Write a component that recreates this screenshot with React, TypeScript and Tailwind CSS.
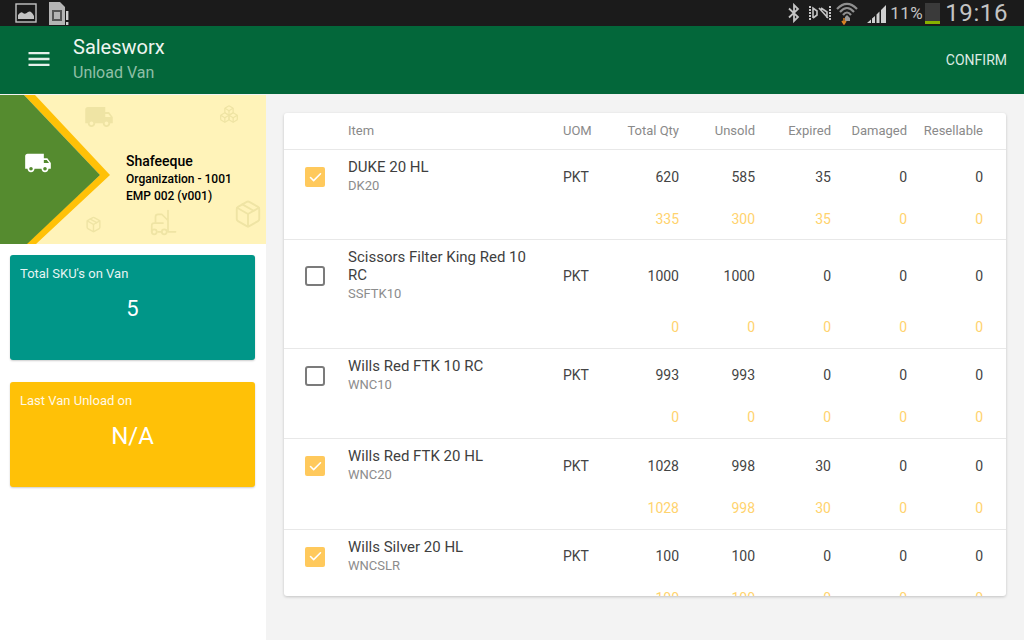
import { MdLocalShipping, MdMenu } from 'react-icons/md'
import { Boxes, Check, Forklift, Package } from 'lucide-react'

interface Row {
  name: string
  code: string
  checked: boolean
  qty: number[]
  unload: number[]
}

const rows: Row[] = [
  { name: 'DUKE 20 HL', code: 'DK20', checked: true, qty: [620, 585, 35, 0, 0], unload: [335, 300, 35, 0, 0] },
  { name: 'Scissors Filter King Red 10 RC', code: 'SSFTK10', checked: false, qty: [1000, 1000, 0, 0, 0], unload: [0, 0, 0, 0, 0] },
  { name: 'Wills Red FTK 10 RC', code: 'WNC10', checked: false, qty: [993, 993, 0, 0, 0], unload: [0, 0, 0, 0, 0] },
  { name: 'Wills Red FTK 20 HL', code: 'WNC20', checked: true, qty: [1028, 998, 30, 0, 0], unload: [1028, 998, 30, 0, 0] },
  { name: 'Wills Silver 20 HL', code: 'WNCSLR', checked: true, qty: [100, 100, 0, 0, 0], unload: [100, 100, 0, 0, 0] },
]

const columns = ['Total Qty', 'Unsold', 'Expired', 'Damaged', 'Resellable']

function StatusBar() {
  return (
    <div className="flex h-[26px] shrink-0 items-center bg-[#1b1b1b] text-[#c4c4c4]">
      <svg width="22" height="20" viewBox="0 0 22 20" className="ml-[15px]">
        <rect x="1" y="1" width="20" height="18" fill="none" stroke="#c4c4c4" strokeWidth="1.4" />
        <path d="M3 16 L3 12 Q6 8 8 10 Q10 12 13 9 Q16 7 19 13 L19 16 Z" fill="#c4c4c4" />
      </svg>
      <svg width="20" height="24" viewBox="0 0 20 24" className="ml-[12px]">
        <path d="M0 1 H11 L16 6 V24 H0 Z" fill="#b5b5b5" />
        <rect x="3" y="9" width="10" height="11" fill="#555" />
        <rect x="5" y="11" width="6" height="7" fill="#b5b5b5" />
        <rect x="17" y="10" width="2.4" height="9" fill="#d0d0d0" />
        <rect x="17" y="21" width="2.4" height="3" fill="#d0d0d0" />
      </svg>
      <div className="ml-auto flex items-center">
        <svg width="12" height="20" viewBox="0 0 12 20">
          <path d="M1 5.5 L10 14 L6 18 V2 L10 6 L1 14.5" fill="none" stroke="#c4c4c4" strokeWidth="1.8" />
        </svg>
        <svg width="24" height="18" viewBox="0 0 24 18" className="ml-[8px]">
          <path d="M2 2 V16 M22 2 V16" stroke="#c4c4c4" strokeWidth="2" strokeDasharray="2 1" fill="none" />
          <path d="M5 14 V4 L9 7 V11 L5 14 M11 4 L20 14 M13 4 L19 8 V14" fill="none" stroke="#c4c4c4" strokeWidth="1.6" />
        </svg>
        <svg width="22" height="24" viewBox="0 0 22 24" className="ml-[4px]">
          <path d="M1 8 Q11 -2 21 8 M4 11 Q11 3 18 11 M7 14 Q11 9 15 14" fill="none" stroke="#8f8f8f" strokeWidth="2.2" />
          <path d="M11 14 L14 17 V20 H9 V16 Z" fill="#9a9a9a" />
          <path d="M8 17 V22 M6 20 L8 23 L10 20" fill="none" stroke="#d98324" strokeWidth="1.5" />
        </svg>
        <svg width="20" height="20" viewBox="0 0 20 20" className="ml-[9px]">
          <path d="M0 20 L4 16.5 V20 Z M5 20 V15.5 L8 13 V20 Z M9.5 20 V11.5 L12.5 8.5 V20 Z M14 20 V7 L19 2 V20 Z" fill="#d0d0d0" />
        </svg>
        <span className="ml-[3px] text-[17px] leading-none tracking-[0.5px] [font-family:Roboto,sans-serif]">11%</span>
        <div className="ml-[2px] flex h-[21px] w-[15px] flex-col justify-end bg-[#3a3a3a]">
          <div className="h-[3px] bg-[#86b000]" />
        </div>
        <span className="ml-[5px] mr-[16px] text-[24px] leading-none tracking-[0.6px] [font-family:Roboto,sans-serif]">19:16</span>
      </div>
    </div>
  )
}

function Banner() {
  return (
    <div className="relative h-[149px] overflow-hidden bg-[#fff3b9]">
      <svg width="266" height="149" viewBox="0 0 266 149" className="absolute left-0 top-0">
        <path d="M24 0 H35 L110 80 L36 149 H26 L100 80 Z" fill="#ffc107" />
        <path d="M0 0 H24 L100 80 L27 149 H0 Z" fill="#558b2f" />
      </svg>
      <MdLocalShipping className="absolute left-[24px] top-[54px] text-[28px] text-white" />
      <MdLocalShipping className="absolute left-[84px] top-[7px] text-[30px] text-[#efe4a4]" />
      <Boxes className="absolute left-[219px] top-[9px] h-[20px] w-[20px] text-[#efe4a4]" strokeWidth={1.5} />
      <Package className="absolute left-[85px] top-[121px] h-[17px] w-[17px] text-[#efe4a4]" strokeWidth={2} />
      <Forklift className="absolute left-[144px] top-[113px] h-[30px] w-[38px] text-[#efe4a4]" strokeWidth={1.4} />
      <Package className="absolute left-[233px] top-[104px] h-[30px] w-[30px] text-[#efe4a4]" strokeWidth={1.5} />
      <div className="absolute left-[126px] top-[57px] text-black">
        <div className="text-[14px] font-medium leading-[18px]">Shafeeque</div>
        <div className="mt-[1px] text-[12px] font-medium leading-[17px]">Organization - 1001</div>
        <div className="text-[12px] font-medium leading-[17px]">EMP 002 (v001)</div>
      </div>
    </div>
  )
}

function StatCard({ title, value, color, size }: { title: string; value: string; color: string; size: string }) {
  return (
    <div className={`h-[105px] rounded-[3px] px-[10px] pt-[10px] text-white shadow-[0_1px_2px_rgba(0,0,0,0.2)] ${color}`}>
      <div className="text-[13px] leading-[18px] opacity-90">{title}</div>
      <div className={`mt-[10px] text-center leading-[32px] ${size}`}>{value}</div>
    </div>
  )
}

function TableRow({ row }: { row: Row }) {
  return (
    <div className="border-b border-[#e8e8e8] pb-[10.4px] pr-[22px] pt-[8px]">
      <div className="flex items-center">
        <div className="w-[64px] pl-[21px]">
          {row.checked ? (
            <div className="flex h-[20px] w-[20px] items-center justify-center rounded-[2px] bg-[#ffc95c]">
              <Check className="h-[15px] w-[15px] text-white" strokeWidth={2.5} />
            </div>
          ) : (
            <div className="h-[20px] w-[20px] rounded-[3px] border-2 border-[#7b7b7b]" />
          )}
        </div>
        <div className="w-[215px] pr-[25px]">
          <div className="text-[15px] leading-[18px] text-[#3f3f3f]">{row.name}</div>
          <div className="text-[13px] leading-[20px] text-[#8c8c8c]">{row.code}</div>
        </div>
        <div className="w-[40px] text-[14px] text-[#444]">PKT</div>
        {row.qty.map((q, i) => (
          <div key={i} className="w-[76px] text-right text-[14px] text-[#444]">{q}</div>
        ))}
      </div>
      <div className="mt-[13px] flex h-[20px] items-center pl-[319px]">
        {row.unload.map((q, i) => (
          <div key={i} className="w-[76px] text-right text-[14px] text-[#ffd36e]">{q}</div>
        ))}
      </div>
    </div>
  )
}

export default function App() {
  return (
    <div className="flex h-[640px] w-[1024px] flex-col overflow-hidden bg-[#f3f3f3] [font-family:Roboto,sans-serif]">
      <StatusBar />
      <header className="flex h-[68px] shrink-0 items-center bg-[#03673a] pb-[2px] text-white">
        <MdMenu className="ml-[25px] text-[28px] text-[#e6f0ea]" />
        <div className="ml-[20px]">
          <div className="text-[20px] leading-[26px] text-[#eef5f0]">Salesworx</div>
          <div className="mt-[2px] text-[16px] leading-[22px] text-[#8fbfa6]">Unload Van</div>
        </div>
        <div className="ml-auto mr-[17px] mt-[3px] text-[14px] text-[#dcebe3]">CONFIRM</div>
      </header>
      <div className="flex min-h-0 flex-1 pt-[1px]">
        <aside className="w-[266px] shrink-0 bg-white">
          <Banner />
          <div className="flex flex-col gap-[22px] pl-[10px] pr-[11px] pt-[11px]">
            <StatCard title="Total SKU's on Van" value="5" color="bg-[#009688]" size="text-[22px]" />
            <StatCard title="Last Van Unload on" value="N/A" color="bg-[#ffc107]" size="text-[24px]" />
          </div>
        </aside>
        <main className="min-w-0 flex-1 pl-[18px] pr-[18px] pt-[18px]">
          <div className="h-[483px] overflow-hidden rounded-[3px] bg-white shadow-[0_1px_3px_rgba(0,0,0,0.2)]">
            <div className="flex h-[37px] items-center border-b border-[#e8e8e8] pr-[22px] text-[13px] text-[#8a8a8a]">
              <div className="w-[64px]" />
              <div className="w-[215px]">Item</div>
              <div className="w-[40px]">UOM</div>
              {columns.map((c) => (
                <div key={c} className="w-[76px] whitespace-nowrap text-right">{c}</div>
              ))}
            </div>
            {rows.map((row) => (
              <TableRow key={row.code} row={row} />
            ))}
          </div>
        </main>
      </div>
    </div>
  )
}
